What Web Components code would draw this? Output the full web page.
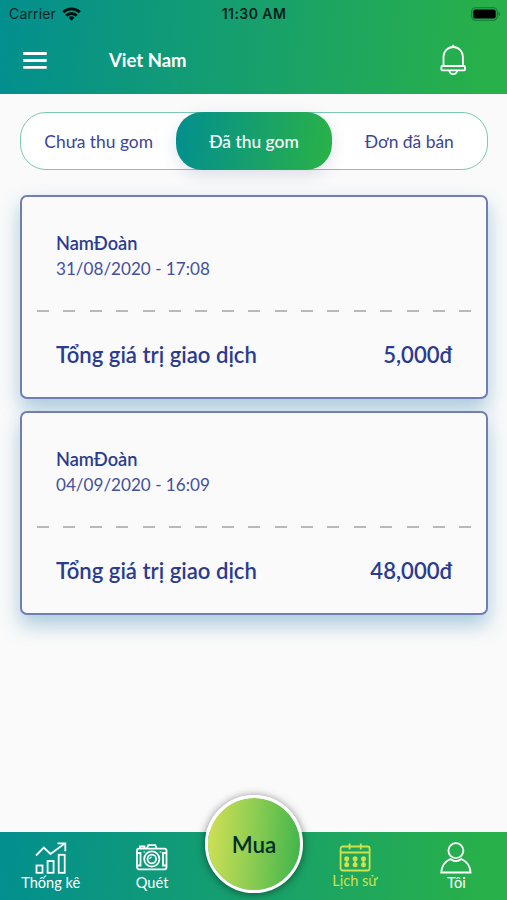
<!DOCTYPE html>
<html lang="vi">
  <head>
    <meta charset="UTF-8" />
    <meta name="viewport" content="width=device-width, initial-scale=1.0" />
    <title>Lịch sử</title>
    <style>
      body {
        margin: 0;
        background: #fafafa;
        font-family: Lato, "Open Sans", sans-serif;
        --brand: linear-gradient(96deg, #028f8f 0%, #17a06c 50%, #28b04a 95%);
        --navy: #2b3c8e;
      }
    </style>
  </head>
  <body>
    <uc-screen>
      <uc-header slot="header">Viet Nam</uc-header>
      <uc-tabs>
        <uc-tab>Chưa thu gom</uc-tab>
        <uc-tab active>Đã thu gom</uc-tab>
        <uc-tab>Đơn đã bán</uc-tab>
      </uc-tabs>
      <uc-order>
        <span slot="name">NamĐoàn</span>
        <span slot="date">31/08/2020 - 17:08</span>
        <span slot="total">5,000đ</span>
      </uc-order>
      <uc-order>
        <span slot="name">NamĐoàn</span>
        <span slot="date">04/09/2020 - 16:09</span>
        <span slot="total">48,000đ</span>
      </uc-order>
      <uc-nav slot="footer">
        <uc-nav-item icon="chart">Thống kê</uc-nav-item>
        <uc-nav-item icon="camera">Quét</uc-nav-item>
        <uc-buy-button>Mua</uc-buy-button>
        <uc-nav-item icon="calendar" active>Lịch sử</uc-nav-item>
        <uc-nav-item icon="user">Tôi</uc-nav-item>
      </uc-nav>
    </uc-screen>

    <script>
      class Screen extends HTMLElement {
        constructor() {
          super();
          this.attachShadow({ mode: "open" });
          this.shadowRoot.innerHTML = `
            <style>
              :host {
                display: flex;
                flex-direction: column;
                height: 100vh;
                overflow: hidden;
              }

              main {
                flex: 1;
                min-height: 0;
                display: flex;
                flex-direction: column;
                gap: 12px;
                padding: 18px 19px 0 20px;
              }
            </style>
            <slot name="header"></slot>
            <main><slot></slot></main>
            <slot name="footer"></slot>
          `;
        }
      }

      class StatusBar extends HTMLElement {
        constructor() {
          super();
          this.attachShadow({ mode: "open" });
          this.shadowRoot.innerHTML = `
            <style>
              :host {
                display: grid;
                grid-template-columns: 1fr auto 1fr;
                align-items: center;
                height: 27px;
                padding: 0 6px 0 9px;
                box-sizing: border-box;
                font: 14px/27px Inter, "Liberation Sans", sans-serif;
                color: #06231f;
              }

              .carrier {
                display: flex;
                align-items: center;
                gap: 6px;
                letter-spacing: 0.15px;
              }

              .time {
                font-size: 14px;
                font-weight: 600;
                letter-spacing: 0.45px;
                margin-right: 2px;
              }

              .battery {
                justify-self: end;
              }

              svg {
                display: block;
              }
            </style>
            <div class="carrier">
              <span>Carrier</span>
              <svg width="19" height="14" viewBox="0 0 19 14" fill="none" stroke="#04110f" stroke-width="2.9">
                <path d="M1.2 5.2a12 12 0 0 1 16.6 0" />
                <path d="M4.2 8.6a7.6 7.6 0 0 1 10.6 0" />
                <path d="M9.5 13.8l-3-3.2a4.3 4.3 0 0 1 6 0z" fill="#04110f" stroke="none" />
              </svg>
            </div>
            <span class="time">11:30 AM</span>
            <svg class="battery" width="30" height="14" viewBox="0 0 30 14">
              <rect x=".7" y=".7" width="25.6" height="12.6" rx="4" fill="none" stroke="#10602f" stroke-opacity=".75" stroke-width="1.1" />
              <rect x="2.3" y="2.4" width="22.4" height="9.2" rx="2.2" fill="#000" />
              <path d="M27.6 5v4c2-.8 2-3.2 0-4z" fill="#10602f" fill-opacity=".8" />
            </svg>
          `;
        }
      }

      class Header extends HTMLElement {
        constructor() {
          super();
          this.attachShadow({ mode: "open" });
          this.shadowRoot.innerHTML = `
            <style>
              :host {
                display: block;
                height: 94px;
                background: var(--brand);
                color: white;
              }

              .bar {
                display: flex;
                align-items: center;
                height: 65px;
                padding: 0 40px 0 23px;
              }

              h1 {
                flex: 1;
                margin: 1px 0 0 62px;
                font-size: 18.5px;
                line-height: 24px;
                font-weight: 700;
              }

              svg {
                display: block;
                fill: none;
                stroke: white;
              }
            </style>
            <uc-status-bar></uc-status-bar>
            <div class="bar">
              <svg width="24" height="18" viewBox="0 0 24 18" stroke-width="2.8">
                <path d="M0.3 2.5h23.4M0.3 9.5h23.4M0.3 16.3h23.4" />
              </svg>
              <h1><slot></slot></h1>
              <svg width="27" height="32" viewBox="0 0 27 32" stroke-width="1.8">
                <path d="M3.500 22v-9.300a9.700 9.700 0 0 1 19.400 0v9.300" />
                <path d="M13.200 0.800v2.400" />
                <rect x="1.400" y="22" width="23.600" height="4.400" rx="1" />
                <path d="M9.300 26.600a3.900 3.500 0 0 0 7.800 0" />
              </svg>
            </div>
          `;
        }
      }

      class Tabs extends HTMLElement {
        constructor() {
          super();
          this.attachShadow({ mode: "open" });
          this.shadowRoot.innerHTML = `
            <style>
              :host {
                display: grid;
                grid-template-columns: repeat(3, 1fr);
                box-sizing: border-box;
                height: 58px;
                margin-bottom: 13px;
                border: 1px solid #7ac9b4;
                border-radius: 26px;
                background: white;
              }
            </style>
            <slot></slot>
          `;
        }
      }

      class Tab extends HTMLElement {
        constructor() {
          super();
          this.attachShadow({ mode: "open" });
          this.shadowRoot.innerHTML = `
            <style>
              :host {
                display: flex;
                align-items: center;
                justify-content: center;
                border-radius: 26px;
                font-size: 17.4px;
                color: #3c4595;
              }

              :host([active]) {
                margin: -1px 0;
                background: var(--brand);
                box-shadow: 0 5px 16px rgba(60, 80, 140, 0.16);
                color: white;
                font-weight: 500;
              }
            </style>
            <slot></slot>
          `;
        }
      }

      class Order extends HTMLElement {
        constructor() {
          super();
          this.attachShadow({ mode: "open" });
          this.shadowRoot.innerHTML = `
            <style>
              :host {
                display: block;
                box-sizing: border-box;
                height: 204px;
                padding: 34px 15px 0;
                border: 2px solid #6f7fb5;
                border-radius: 7px;
                background: #fafafa;
                box-shadow: 0 10px 20px rgba(60, 135, 180, 0.42);
                color: var(--navy);
              }

              .info {
                display: flex;
                flex-direction: column;
                padding: 0 19px;
              }

              .name {
                font-size: 18.2px;
                line-height: 25px;
                font-weight: 600;
              }

              .date {
                font-size: 17.1px;
                line-height: 25px;
                color: #44509b;
              }

              .line {
                height: 2px;
                margin: 29px 0;
                background: repeating-linear-gradient(90deg, #b9b9b9 0 12px, transparent 12px 26.4px);
              }

              .sum {
                display: flex;
                justify-content: space-between;
                padding: 0 19px;
                font-size: 22.1px;
                line-height: 28px;
                font-weight: 600;
              }
            </style>
            <div class="info">
              <slot class="name" name="name"></slot>
              <slot class="date" name="date"></slot>
            </div>
            <div class="line"></div>
            <div class="sum">
              <span>Tổng giá trị giao dịch</span>
              <slot name="total"></slot>
            </div>
          `;
        }
      }

      class Nav extends HTMLElement {
        constructor() {
          super();
          this.attachShadow({ mode: "open" });
          this.shadowRoot.innerHTML = `
            <style>
              :host {
                display: grid;
                grid-template-columns: repeat(5, 1fr);
                height: 68px;
                background: var(--brand);
              }
            </style>
            <slot></slot>
          `;
        }
      }

      const icons = {
        chart: `
          <path d="M1 13.5l7.8-8 6.700 6.500L29.500 1.600M22.500 1.400h7.800v7.800" />
          <rect x="1.500" y="23.500" width="6" height="7.300" />
          <rect x="12.600" y="19" width="6" height="11.800" />
          <rect x="23.700" y="12.800" width="6" height="18" />`,
        camera: `
          <rect x="1" y="6.600" width="29.500" height="20.700" rx="2" />
          <path d="M4 6.300V4.500h4.500v1.800M11 6.300l1.300-3.200h7l1.300 3.200M1.300 11h3.200v12.500H1.300M30.200 11H27v12.500h3.200" />
          <circle cx="15.800" cy="17" r="7.600" />
          <circle cx="15.800" cy="17" r="4.300" />
          <path d="M13.800 17a2 2 0 0 1 2-2M7.500 10h1.800M23.500 10h2" stroke-width="1.200" />`,
        calendar: `
          <rect x="1.600" y="4.500" width="29" height="24" rx="2" />
          <path d="M1.600 10.500h29M10.600 1.500v6M21.800 1.500v6" />
          <g fill="currentColor" stroke="none">
            <circle cx="7.700" cy="16.700" r="2.500" />
            <circle cx="16.100" cy="16.700" r="2.500" />
            <circle cx="24.500" cy="16.700" r="2.500" />
            <circle cx="7.700" cy="22.700" r="2.500" />
            <circle cx="16.100" cy="22.700" r="2.500" />
            <circle cx="24.500" cy="22.700" r="2.500" />
          </g>
          <path d="M7.700 17v6M16.100 17v6M24.500 17v6" />`,
        user: `
          <circle cx="15.900" cy="8.600" r="7.500" />
          <path d="M10.500 17C5 19.500 1.600 23.500 1.200 30.500h29.400C30.200 23.500 26.800 19.500 21.300 17c-3.200 2.700-7.600 2.700-10.800 0z" />`,
      };

      class NavItem extends HTMLElement {
        constructor() {
          super();
          this.attachShadow({ mode: "open" });
        }

        connectedCallback() {
          this.shadowRoot.innerHTML = `
            <style>
              :host {
                display: flex;
                flex-direction: column;
                align-items: center;
                padding-top: 10px;
                color: white;
                font-size: 14.6px;
                line-height: 18px;
              }

              :host([active]) {
                color: #cfe14d;
              }

              :host([active]) .label {
                margin-top: -2px;
              }

              svg {
                display: block;
                fill: none;
                stroke: currentColor;
                stroke-width: 1.8;
              }
            </style>
            <svg width="32" height="32" viewBox="0 0 32 32">${icons[this.getAttribute("icon")]}</svg>
            <span class="label"><slot></slot></span>
          `;
        }
      }

      class BuyButton extends HTMLElement {
        constructor() {
          super();
          this.attachShadow({ mode: "open" });
          this.shadowRoot.innerHTML = `
            <style>
              :host {
                display: flex;
                justify-content: center;
              }

              button {
                flex: none;
                width: 98px;
                height: 98px;
                margin: -37px 0 0 1px;
                padding: 0;
                border: 3px solid white;
                border-radius: 50%;
                background: linear-gradient(95deg, #d3e155 3%, #8bcc52 50%, #38b34a 100%) border-box;
                background-clip: padding-box;
                box-shadow: 0 1px 9px rgba(0, 0, 0, 0.5);
                font: 600 22.4px Lato, sans-serif;
                color: #04302a;
              }
            </style>
            <button><slot></slot></button>
          `;
        }
      }

      customElements.define("uc-status-bar", StatusBar);
      customElements.define("uc-header", Header);
      customElements.define("uc-tabs", Tabs);
      customElements.define("uc-tab", Tab);
      customElements.define("uc-order", Order);
      customElements.define("uc-nav-item", NavItem);
      customElements.define("uc-buy-button", BuyButton);
      customElements.define("uc-nav", Nav);
      customElements.define("uc-screen", Screen);
    </script>
  </body>
</html>
